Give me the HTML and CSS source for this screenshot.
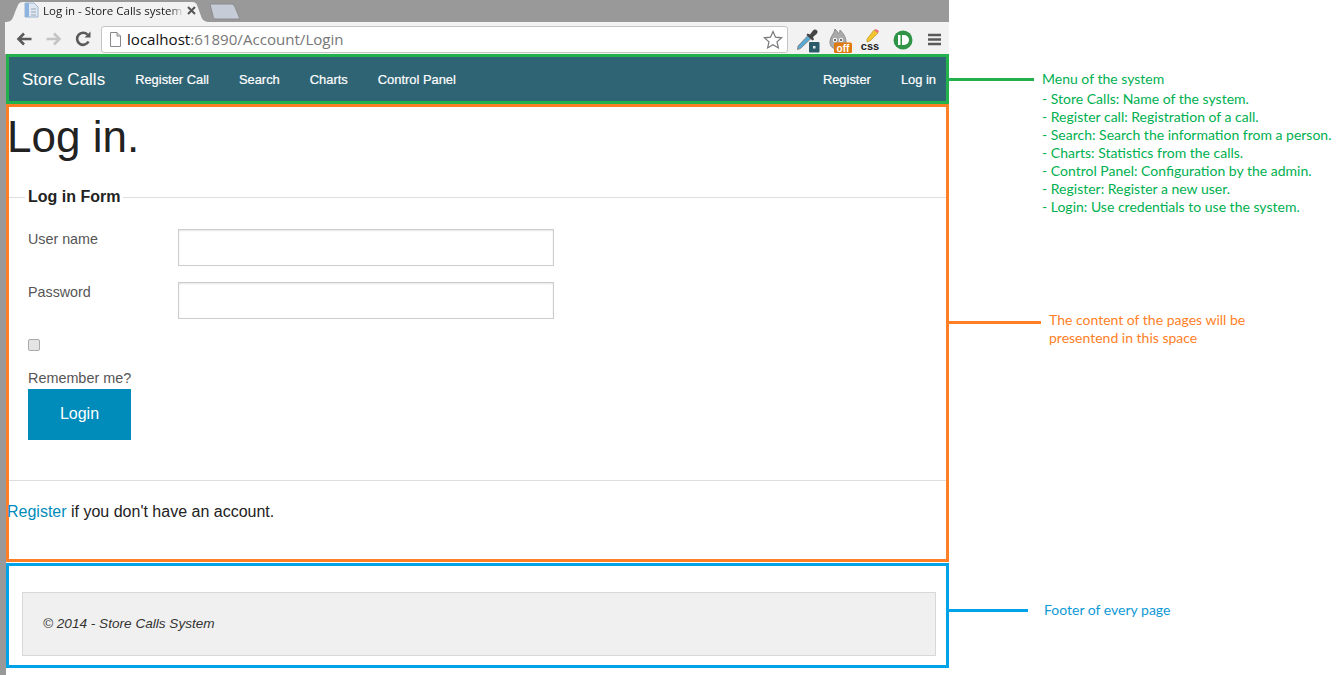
FILE: index.html
```html
<!DOCTYPE html>
<html lang="en">
<head>
<meta charset="utf-8">
<title>Log in - Store Calls system</title>
<link rel="stylesheet" href="styles.css">
</head>
<body>
<div class="window">
  <div class="tabstrip">
    <div class="tab">
      <svg class="tab-shape" width="204" height="20" viewBox="0 0 204 20"><path d="M0 20C6 20 7 16 9 10L12 3C13 1 14 0 17 0H186C189 0 190 1 191 3L195 14C196 18 199 20 204 20Z" fill="#f2f2f2"/></svg>
      <svg class="favicon" width="16" height="16" viewBox="0 0 16 16"><path d="M1 1h9l4 4v10H1z" fill="#dfe8f3" stroke="#9db4cf"/><path d="M1 1h4v14H1z" fill="#8db4de"/><path d="M7 7h5M7 10h5M7 13h5" stroke="#9aa7b5"/></svg>
      <span class="tab-title">Log in - Store Calls system</span>
      <svg class="tab-close" width="9" height="9" viewBox="0 0 9 9"><path d="M1 1l7 7M8 1L1 8" stroke="#555" stroke-width="2"/></svg>
    </div>
    <svg class="newtab" width="32" height="17" viewBox="0 0 32 17"><path d="M1 1H22C24 1 25 2 26 4L31 16H7C5 16 4 15 4 13Z" fill="#c5ccd8" stroke="#8b8b8b"/></svg>
  </div>
  <div class="toolbar">
    <svg class="tool-btn" width="16" height="14" viewBox="0 0 16 14"><path d="M15.500 7H3M8 1.500L2.500 7 8 12.500" fill="none" stroke="#5a5a5a" stroke-width="2.600"/></svg>
    <svg class="tool-btn" width="16" height="14" viewBox="0 0 16 14"><path d="M.5 7H13M8 1.500L13.500 7 8 12.500" fill="none" stroke="#c4c4c4" stroke-width="2.600"/></svg>
    <svg class="tool-btn" width="16" height="16" viewBox="0 0 16 16"><path d="M13.500 10.500A6 6 0 1 1 12.500 3.700" fill="none" stroke="#5a5a5a" stroke-width="2.600"/><path d="M9.500 6.500H15.500V.5Z" fill="#5a5a5a"/></svg>
    <div class="omnibox">
      <svg class="page-icon" width="11" height="15" viewBox="0 0 11 15"><path d="M.5.5H7L10.500 4V14.500H.5Z" fill="#fff" stroke="#8a8a8a"/><path d="M7 .5V4H10.500" fill="#ddd" stroke="#8a8a8a"/></svg>
      <span class="url"><span class="url-host">localhost</span>:61890/Account/Login</span>
      <svg class="star" width="20" height="19" viewBox="0 0 20 19"><path d="M10 1.500L12.500 7.200 18.600 7.800 14 11.900 15.400 17.900 10 14.800 4.600 17.900 6 11.900 1.400 7.800 7.500 7.200Z" fill="#fff" stroke="#777" stroke-width="1.200"/></svg>
    </div>
    <div class="extensions">
      <svg width="23" height="25" viewBox="0 0 23 25"><path d="M1 18L11 7.500 14 10.500 3.500 20.500 .5 21.500Z" fill="#57a9d6" stroke="#888"/><path d="M10.500 5.500L13 6.500 16 2.500C17 1 19 1 20 2.500 21 3.500 20.500 5 19.500 6L16 9 17 11.500 15.500 12.500 9.500 7Z" fill="#444"/><rect x="12" y="14" width="10.500" height="10.500" rx="1" fill="#2b5a68"/><rect x="16" y="18" width="2.500" height="2.500" fill="#dfe8ea"/></svg>
      <svg width="24" height="25" viewBox="0 0 24 25"><path d="M2 14C2 8 6 7 7 1c2 2 3 3 3 5 1-1 2-2 2-4 3 3 6 7 6 12 0 5-3 7-8 7s-8-2-8-7Z" fill="#aaa" stroke="#8c8c8c"/><circle cx="7" cy="12" r="2.200" fill="#f2f2f2"/><circle cx="13" cy="12" r="2.200" fill="#f2f2f2"/><circle cx="7" cy="12" r="1" fill="#444"/><circle cx="13" cy="12" r="1" fill="#444"/><rect x="6" y="14.500" width="18" height="10.500" rx="1.500" fill="#df7a10"/><text x="15" y="23.500" class="off-text" text-anchor="middle">off</text></svg>
      <svg width="20" height="24" viewBox="0 0 20 24"><path d="M7 11L14 2l4 3-8 8-3 1Z" fill="#f3c531" stroke="#b48a18" stroke-width=".6"/><path d="M14 2l4 3 1-2-3-2Z" fill="#ef6f7c"/><text x="10" y="22" class="css-text" text-anchor="middle">css</text></svg>
      <svg class="pushbullet" width="20" height="20" viewBox="0 0 20 20"><circle cx="10" cy="10" r="9.500" fill="#2f9445"/><rect x="5" y="5" width="2.500" height="10" fill="#fff"/><path d="M9 5h2a5 5 0 0 1 0 10H9Z" fill="#fff"/></svg>
      <svg class="menu-icon" width="13" height="13" viewBox="0 0 13 13"><path d="M0 2h13M0 6.500h13M0 11h13" stroke="#5a5a5a" stroke-width="2.400"/></svg>
    </div>
  </div>

  <div class="content-column">
    <section class="frame frame-menu">
      <nav class="navbar">
        <a class="brand" href="#">Store Calls</a>
        <a class="nav-link" href="#">Register Call</a>
        <a class="nav-link" href="#">Search</a>
        <a class="nav-link" href="#">Charts</a>
        <a class="nav-link" href="#">Control Panel</a>
        <a class="nav-link nav-push" href="#">Register</a>
        <a class="nav-link" href="#">Log in</a>
      </nav>
      <div class="callout callout-menu">
        <span class="connector"></span>
        <div class="callout-text">
          <p class="callout-title">Menu of the system</p>
          <ul class="callout-list">
            <li>- Store Calls: Name of the system.</li>
            <li>- Register call: Registration of a call.</li>
            <li>- Search: Search the information from a person.</li>
            <li>- Charts: Statistics from the calls.</li>
            <li>- Control Panel: Configuration by the admin.</li>
            <li>- Register: Register a new user.</li>
            <li>- Login: Use credentials to use the system.</li>
          </ul>
        </div>
      </div>
    </section>

    <section class="frame frame-content">
      <h1 class="title">Log in.</h1>
      <form class="login-form">
        <fieldset class="fieldset">
          <legend class="legend">Log in Form</legend>
          <div class="field">
            <label class="field-label" for="user">User name</label>
            <input class="field-input" id="user" type="text">
          </div>
          <div class="field">
            <label class="field-label" for="pass">Password</label>
            <input class="field-input" id="pass" type="password">
          </div>
          <input class="checkbox" id="remember" type="checkbox">
          <label class="remember-label" for="remember">Remember me?</label>
          <button class="login-btn" type="button">Login</button>
        </fieldset>
      </form>
      <hr class="rule">
      <p class="register-line"><a class="register-link" href="#">Register</a> if you don't have an account.</p>
      <div class="callout callout-content">
        <span class="connector"></span>
        <p class="callout-text">The content of the pages will be<br>presentend in this space</p>
      </div>
    </section>

    <section class="frame frame-footer">
      <footer class="footer-box">© 2014 - Store Calls System</footer>
      <div class="callout callout-footer">
        <span class="connector"></span>
        <p class="callout-text">Footer of every page</p>
      </div>
    </section>
  </div>
</div>
</body>
</html>
```

FILE: styles.css
```css
* { box-sizing: border-box; }
html, body { margin: 0; height: 675px; overflow: hidden; background: #fff; }
body { font-family: "Liberation Sans", Arial, sans-serif; color: #222; }

.window { width: 949px; height: 675px; background: linear-gradient(#999, #999) left top / 6px 100% no-repeat; }

.tabstrip { height: 22px; background: #999; display: flex; align-items: flex-end; position: relative; }
.tab { position: relative; width: 204px; height: 20px; margin-left: 6px; display: flex; align-items: center; padding: 0 10px 4px 18px; }
.tab-shape { position: absolute; left: 0; top: 0; }
.favicon { position: relative; flex: none; margin-right: 3px; }
.tab-title { position: relative; font: 11.500px "Open Sans", sans-serif; color: #222; white-space: nowrap; overflow: hidden; width: 141px; -webkit-mask-image: linear-gradient(90deg, #000 90%, transparent); mask-image: linear-gradient(90deg, #000 90%, transparent); }
.tab-close { position: relative; flex: none; margin-left: 3px; }
.newtab { margin: 0 0 2px -1px; flex: none; }

.toolbar { height: 32px; margin-left: 5px; background: #f2f2f2; display: flex; align-items: center; padding-left: 12px; }
.tool-btn { flex: none; margin: 2px 13px 0 0; }
.toolbar .tool-btn:first-child { margin-left: -1px; margin-right: 14px; }
.omnibox { flex: none; width: 687px; height: 27px; margin-left: -3px; margin-top: 3px; background: #fff; border: 1px solid #c4c4c4; border-radius: 3px; display: flex; align-items: center; padding: 0 4px 0 8px; }
.page-icon { flex: none; }
.url { flex: 1; margin-left: 6px; padding-bottom: 1px; font: 15.100px "Open Sans", sans-serif; color: #777; white-space: nowrap; }
.url-host { color: #111; }
.extensions { flex: 1; display: flex; align-items: center; gap: 8px; padding-left: 9px; margin-top: 4px; }
.extensions svg { flex: none; }
.off-text { font: bold 10px "Liberation Sans", sans-serif; fill: #fff; }
.css-text { font: bold 11px "Liberation Sans", sans-serif; fill: #222; }
.extensions .pushbullet { margin-left: 5px; }
.menu-icon { margin: -2px 0 0 7px; }

.content-column { margin-left: 6px; background: #fff; display: flex; flex-direction: column; height: 621px; }
.frame { position: relative; border: 3px solid; flex: none; }
.frame-menu { height: 50px; border-color: #22b14c; }
.frame-content { height: 458px; border-color: #ff7f27; margin-bottom: 1px; }
.frame-footer { height: 105px; border-color: #00a2e8; padding: 26px 10px 0 13px; }

.navbar { height: 100%; background: #2f6475; display: flex; align-items: center; padding: 1px 10px 0 13px; color: #fff; }
.brand { font-size: 17px; color: #fff; text-decoration: none; margin-right: 30px; }
.nav-link { font-size: 12.900px; color: #fff; text-decoration: none; margin-right: 30px; -webkit-text-stroke: .2px #fff; }
.nav-link:last-child { margin-right: 0; }
.nav-push { margin-left: auto; }

.title { margin: 4px 0 0 -2px; font-size: 44px; font-weight: 400; line-height: 52px; color: #222; }
.login-form { margin-top: 25px; }
.fieldset { margin: 0; padding: 23px 0 40px 19px; border: 0; border-top: 1px solid #ddd; min-width: 0; }
.legend { padding: 0 3px; margin-left: -3px; font-size: 16px; font-weight: 700; color: #222; line-height: 18px; }
.field { display: flex; height: 53px; align-items: flex-start; }
.field-label { width: 150px; flex: none; font-size: 14.300px; color: #555; padding-top: 2px; }
.field-input { width: 376px; height: 37px; border: 1px solid #ccc; background: #fff; box-shadow: inset 0 1px 2px rgba(0,0,0,.1); }
.checkbox { display: block; appearance: none; -webkit-appearance: none; width: 12px; height: 12px; margin: 4px 0 0; border: 1px solid #aaa; border-radius: 2px; background: #e4e4e4; }
.remember-label { display: block; margin-top: 19px; font-size: 14.400px; color: #555; line-height: 16px; }
.login-btn { display: block; width: 103px; height: 51px; margin-top: 3px; padding-bottom: 2px; border: 0; background: #008cba; color: #fff; font: 16px "Liberation Sans", sans-serif; }
.rule { margin: 0; border: 0; border-top: 1px solid #ddd; }
.register-line { margin: 21px 0 0 -2px; font-size: 16px; line-height: 20px; color: #222; }
.register-link { color: #008cba; text-decoration: none; }

.footer-box { height: 64px; background: #f0f0f0; border: 1px solid #d8d8d8; padding: 0 0 2px 20px; display: flex; align-items: center; font-size: 13.600px; font-style: italic; color: #333; }

.callout { position: absolute; left: 100%; display: flex; font-family: Lato, sans-serif; font-size: 14px; white-space: nowrap; }
.callout p, .callout ul { margin: 0; padding: 0; list-style: none; }
.connector { position: absolute; left: 0; height: 3px; }
.callout-menu { top: 13px; color: #00b050; padding-left: 96px; }
.callout-menu .connector { top: 8px; width: 88px; background: #22b14c; }
.callout-title { line-height: 18px; }
.callout p.callout-title { margin-bottom: 2px; }
.callout-list li { line-height: 18px; }
.callout-content { top: 204px; color: #ff7f27; padding-left: 103px; }
.callout-content .connector { top: 10px; width: 95px; background: #ff7f27; }
.callout-content .callout-text { line-height: 18px; }
.callout-footer { top: 35px; color: #0e9ad6; padding-left: 98px; }
.callout-footer .connector { top: 8px; width: 82px; background: #00a2e8; }
```
